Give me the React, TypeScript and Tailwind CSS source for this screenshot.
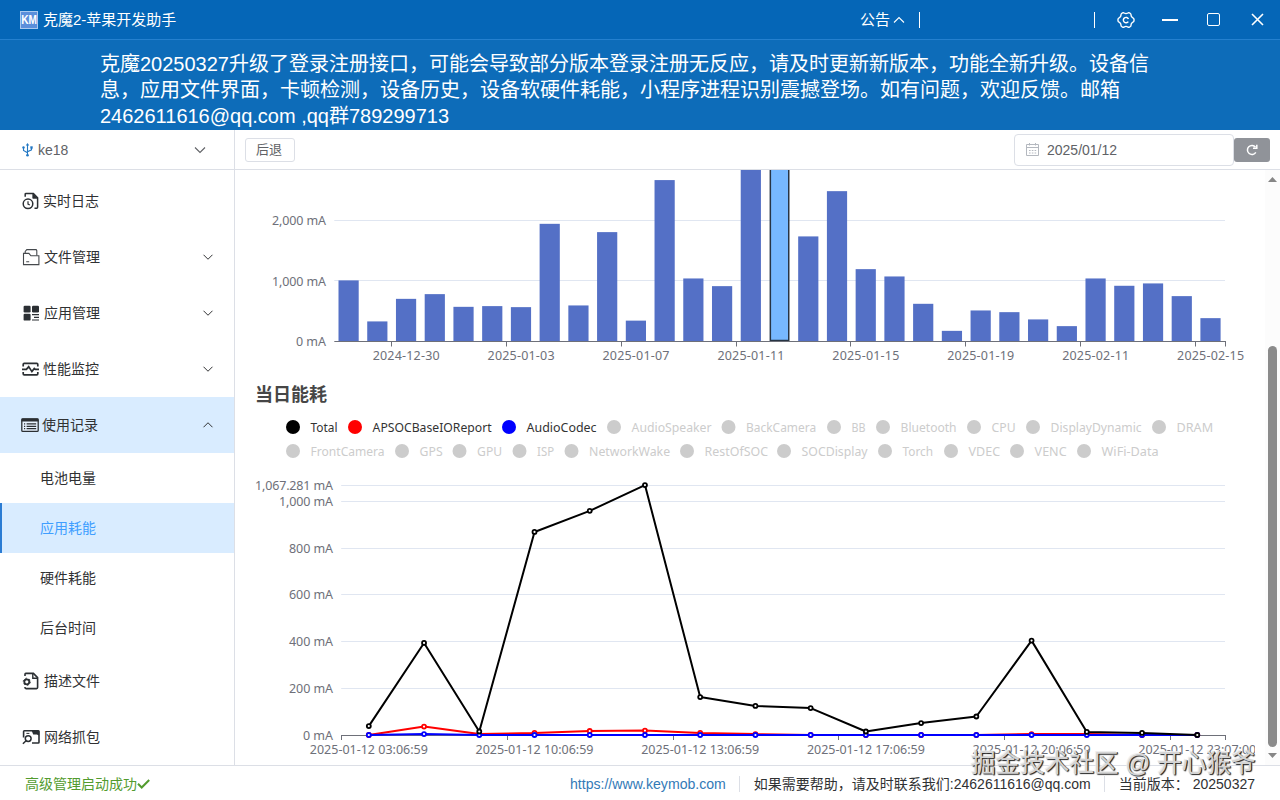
import { useState } from "react";
import type { ReactNode } from "react";

const DAILY = [
  1010, 332, 705, 783, 573, 585, 568, 1945, 596, 1808, 345, 2668, 1042, 915,
  3120, 3300, 1737, 2485, 1196, 1075, 623, 176, 513, 485, 365, 254, 1042, 921,
  960, 750, 386,
];
const SELECTED_DAY = 15;

const DAY_LABELS = [
  "2024-12-30",
  "2025-01-03",
  "2025-01-07",
  "2025-01-11",
  "2025-01-15",
  "2025-01-19",
  "2025-02-11",
  "2025-02-15",
];

const SERIES = [
  {
    color: "#ff0000",
    data: [0, 36, 4, 9, 17, 19, 9, 4, 0, 0, 0, 0, 4, 4, 0, 0],
  },
  {
    color: "#0000ff",
    data: [0, 4, 0, 0, 0, 0, 0, 0, 0, 0, 0, 0, 0, 0, 0, 0],
  },
  {
    color: "#000000",
    data: [
      38, 393, 15, 867, 957, 1067.281, 162, 124, 115, 15, 51, 79, 403, 13, 9, 0,
    ],
  },
];

const HOUR_LABELS = [
  "2025-01-12 03:06:59",
  "2025-01-12 10:06:59",
  "2025-01-12 13:06:59",
  "2025-01-12 17:06:59",
  "2025-01-12 20:06:59",
  "2025-01-12 23:07:00",
];

type LegendItem = { name: string; x: number; w: number; color?: string };

const LEGEND: LegendItem[][] = [
  [
    { name: "Total", x: 38, w: 27, color: "#000000" },
    { name: "APSOCBaseIOReport", x: 100, w: 119, color: "#ff0000" },
    { name: "AudioCodec", x: 254, w: 70, color: "#0000ff" },
    { name: "AudioSpeaker", x: 359, w: 80 },
    { name: "BackCamera", x: 473.5, w: 70 },
    { name: "BB", x: 579, w: 14 },
    { name: "Bluetooth", x: 628, w: 56 },
    { name: "CPU", x: 719, w: 24 },
    { name: "DisplayDynamic", x: 778, w: 91 },
    { name: "DRAM", x: 904, w: 36.5 },
  ],
  [
    { name: "FrontCamera", x: 38, w: 74 },
    { name: "GPS", x: 147, w: 23 },
    { name: "GPU", x: 204.5, w: 25 },
    { name: "ISP", x: 264.5, w: 17 },
    { name: "NetworkWake", x: 316.5, w: 81 },
    { name: "RestOfSOC", x: 432, w: 63.5 },
    { name: "SOCDisplay", x: 529, w: 66 },
    { name: "Torch", x: 630, w: 30.5 },
    { name: "VDEC", x: 696, w: 31.5 },
    { name: "VENC", x: 762, w: 32 },
    { name: "WiFi-Data", x: 829, w: 57 },
  ],
];

function DailyChart() {
  const left = 79.3;
  const step = 28.73;
  const base = 171.5;
  const scale = 0.0605;

  return (
    <svg
      width="1000"
      height="210"
      className="block shrink-0 font-['Noto_Sans',sans-serif] text-[12.5px]"
    >
      {[0, 1000, 2000].map((v) => (
        <g key={v}>
          {v > 0 && (
            <line
              x1={left}
              x2="970"
              y1={Math.floor(base - v * scale - 0.4) + 0.5}
              y2={Math.floor(base - v * scale - 0.4) + 0.5}
              stroke="#E0E6F1"
            />
          )}
          <text
            x="71"
            y={base - v * scale + 4.5}
            textAnchor="end"
            textLength={v > 0 ? 54 : 30}
            fill="#6E7079"
          >
            {v.toLocaleString("en-US")} mA
          </text>
        </g>
      ))}
      {DAILY.map((v, i) => {
        const h = v * scale;
        const x = left + step * i + 4.2;
        if (i === SELECTED_DAY) {
          return (
            <rect
              key={i}
              x={x + 0.9}
              y={base - h}
              width="18.4"
              height={h - 1}
              fill="#77b8ff"
              stroke="#273444"
              strokeWidth="1.5"
            />
          );
        }
        return (
          <rect
            key={i}
            x={x}
            y={base - h}
            width="20.2"
            height={h}
            fill="#5470c6"
          />
        );
      })}
      <line x1={left} x2="971" y1={base} y2={base} stroke="#6E7079" />
      {DAY_LABELS.map((label, i) => {
        const tick = Math.round(left + step * (2 + i * 4)) - 0.5;
        return (
          <g key={label}>
            <line
              x1={tick}
              x2={tick}
              y1={base}
              y2={base + 5}
              stroke="#6E7079"
            />
            <text
              x={left + step * (2.5 + i * 4)}
              y="190"
              textAnchor="middle"
              textLength="67"
              fill="#6E7079"
            >
              {label}
            </text>
          </g>
        );
      })}
      <line x1="970.5" x2="970.5" y1={base} y2={base + 5} stroke="#6E7079" />
    </svg>
  );
}

function HourlyChart() {
  const left = 86.2;
  const step = 55.23;
  const base = 325;
  const scale = 0.2342;
  const px = (i: number) => left + step * (i + 0.5);
  const py = (v: number) => base - v * scale;

  return (
    <svg
      width="1000"
      height="355"
      className="block shrink-0 font-['Noto_Sans',sans-serif] text-[12.5px]"
    >
      {LEGEND.map((row, r) =>
        row.map((item) => (
          <g key={item.name}>
            <circle
              cx={item.x}
              cy={17 + r * 24}
              r="7"
              fill={item.color ?? "#cccccc"}
            />
            <text
              x={item.x + 17.6}
              y={22 + r * 24}
              textLength={item.w}
              lengthAdjust="spacingAndGlyphs"
              fill={item.color ? "#333333" : "#cccccc"}
            >
              {item.name}
            </text>
          </g>
        ))
      )}
      {[0, 200, 400, 600, 800, 1000, 1067.281].map((v) => (
        <g key={v}>
          {v > 0 && (
            <line
              x1={left}
              x2="970"
              y1={Math.round(py(v)) + 0.5}
              y2={Math.round(py(v)) + 0.5}
              stroke="#E0E6F1"
            />
          )}
          <text
            x="78"
            y={py(v) + 5}
            textAnchor="end"
            textLength={v > 1000 ? 78 : v === 1000 ? 54 : v > 0 ? 44 : 30}
            fill="#6E7079"
          >
            {v.toLocaleString("en-US")} mA
          </text>
        </g>
      ))}
      <line
        x1={left}
        x2="971"
        y1={base + 0.5}
        y2={base + 0.5}
        stroke="#6E7079"
      />
      {HOUR_LABELS.map((label, i) => {
        const tick = Math.round(left + step * 3 * i) + 0.5;
        return (
          <g key={label}>
            <line
              x1={tick}
              x2={tick}
              y1={base}
              y2={base + 5}
              stroke="#6E7079"
            />
            <text
              x={px(i * 3)}
              y="344"
              textAnchor="middle"
              textLength="118"
              fill="#6E7079"
            >
              {label}
            </text>
          </g>
        );
      })}
      <line x1="970.5" x2="970.5" y1={base} y2={base + 5} stroke="#6E7079" />
      {SERIES.map((s) => (
        <g key={s.color} stroke={s.color} strokeWidth="2">
          <polyline
            points={s.data.map((v, i) => `${px(i)},${py(v)}`).join(" ")}
            fill="none"
            strokeLinejoin="bevel"
          />
          {s.data.map((v, i) => (
            <circle
              key={i}
              cx={px(i)}
              cy={py(v)}
              r="2"
              fill="#ffffff"
              strokeWidth="1.8"
            />
          ))}
        </g>
      ))}
    </svg>
  );
}

function Chevron({ up, className }: { up?: boolean; className?: string }) {
  return (
    <svg
      width="12"
      height="8"
      viewBox="0 0 12 8"
      fill="none"
      stroke="currentColor"
      strokeWidth="1.1"
      className={className}
    >
      <path d={up ? "M1 6.5l5-5 5 5" : "M1 1.5l5 5 5-5"} />
    </svg>
  );
}

function MenuIcon({ children }: { children: ReactNode }) {
  return (
    <svg
      width="18"
      height="18"
      viewBox="0 0 18 18"
      fill="none"
      stroke="#2b2f33"
      strokeWidth="1.5"
      className="shrink-0"
    >
      {children}
    </svg>
  );
}

const logIcon = (
  <MenuIcon>
    <path d="M3.2 4.8V2.2q0-.7.8-.7h7.4l4.2 4.2v9.6q0 .9-.9.9h-2.2" />
    <path d="M10.8 1.8v4.5h4.5z" fill="#2b2f33" strokeWidth=".8" />
    <circle cx="6" cy="11.8" r="4.8" />
    <path d="M6 9.2v2.9l1.8.9" strokeWidth="1.2" />
  </MenuIcon>
);

const folderIcon = (
  <MenuIcon>
    <g strokeWidth="1.1" stroke="#45494d">
      <path d="M1.5 16.6V5.4h5.4l2 2.4h8v8.8z" />
      <path d="M3.2 5.2V3.4L4.8 1.6h9.4l.6 1v5M4.2 13.8h3" />
    </g>
  </MenuIcon>
);

const appsIcon = (
  <MenuIcon>
    <g fill="#2b2f33" stroke="none">
      <rect x="1.6" y="1.8" width="7" height="6.6" rx="1.2" />
      <rect x="10" y="1.8" width="7" height="6.6" rx="1.2" />
      <rect x="1.6" y="9.8" width="7" height="6.8" rx="1.2" />
    </g>
    <path d="M10 10.6h7M12 13.3h5M10 16h7" strokeWidth="1.2" />
  </MenuIcon>
);

const perfIcon = (
  <MenuIcon>
    <path
      d="M1.2 6.6V4.4q0-1 1-1h12.6q1 0 1 1v2.2M1.2 12v1.8q0 1 1 1h12.6q1 0 1-1V12"
      strokeWidth="1.7"
    />
    <path d="M0 9.4h4.4l2.3-2.8 3.2 5 2.4-3.2 1 .9H17" strokeWidth="1.7" />
  </MenuIcon>
);

const recordIcon = (
  <MenuIcon>
    <rect
      x=".8"
      y="3"
      width="16.4"
      height="12.4"
      rx="1"
      fill="#ffffff"
      fillOpacity=".4"
      strokeWidth="1.3"
    />
    <path d="M.6 4h16.8" strokeWidth="3" />
    <path
      d="M3 7.9h1.2M5.6 7.9h9.6M3 10.3h1.2M5.6 10.3h9.6M3 12.7h1.2M5.6 12.7h9.6"
      strokeWidth="1.2"
    />
  </MenuIcon>
);

const profileIcon = (
  <MenuIcon>
    <path
      d="M3 4V2.2q0-.8.8-.8h7.6L15.6 5.6v10q0 1-1 1H4q-1 0-1-1v-.6"
      strokeWidth="1.6"
    />
    <path d="M10.8 1.6v4.6h4.6" strokeWidth="1.4" />
    <circle cx="4.8" cy="9.8" r="2.5" strokeWidth="1.8" />
    <circle
      cx="4.8"
      cy="9.8"
      r="3.6"
      strokeWidth=".9"
      strokeDasharray="1.6 2.17"
    />
  </MenuIcon>
);

const captureIcon = (
  <MenuIcon>
    <path
      d="M1.6 9.6V3.6q0-.8.8-.8h13.8q.8 0 .8.8v10.6q0 .8-.8.8H10"
      strokeWidth="1.6"
    />
    <path d="M9.6 2.4h7.6v5.2l-2.4-1.2h-3.6z" fill="#2b2f33" stroke="none" />
    <circle cx="6.2" cy="10.6" r="2.9" />
    <path d="M4.1 12.7L.9 15.8" />
    <path d="M4.4 5.4h3" strokeWidth="1" />
  </MenuIcon>
);

type MenuEntry = {
  label: string;
  icon: ReactNode;
  children?: string[];
  expandable?: boolean;
  iconClass: string;
};

const MENU: MenuEntry[] = [
  { label: "实时日志", icon: logIcon, iconClass: "pl-[22px] gap-[3px]" },
  {
    label: "文件管理",
    icon: folderIcon,
    expandable: true,
    iconClass: "pl-[22px] gap-[4px]",
  },
  {
    label: "应用管理",
    icon: appsIcon,
    expandable: true,
    iconClass: "pl-[22px] gap-[4px]",
  },
  {
    label: "性能监控",
    icon: perfIcon,
    expandable: true,
    iconClass: "pl-[22px] gap-[3px]",
  },
  {
    label: "使用记录",
    icon: recordIcon,
    expandable: true,
    children: ["电池电量", "应用耗能", "硬件耗能", "后台时间"],
    iconClass: "pl-[21px] gap-[3px]",
  },
  { label: "描述文件", icon: profileIcon, iconClass: "pl-[22px] gap-[4px]" },
  { label: "网络抓包", icon: captureIcon, iconClass: "pl-[22px] gap-[4px]" },
];

function Sidebar() {
  const [open, setOpen] = useState("使用记录");
  const [active, setActive] = useState("应用耗能");

  return (
    <aside className="flex w-[235px] shrink-0 flex-col border-r border-[#dcdfe6]">
      <div className="flex h-10 shrink-0 items-center border-b border-[#dcdfe6] pr-7 pl-[22px]">
        <svg
          width="11"
          height="14"
          viewBox="0 0 11 14"
          fill="none"
          stroke="#2378c4"
          strokeWidth="1.1"
        >
          <path d="M5.5 2v10M1.5 5v2.4l4 2.3M9.5 5v1.8l-4 2" />
          <path d="M5.5 0L3.8 2.6h3.4z" fill="#2378c4" stroke="none" />
          <circle cx="5.5" cy="12.3" r="1.3" fill="#2378c4" stroke="none" />
          <circle cx="1.5" cy="4.5" r="1.2" fill="#2378c4" stroke="none" />
          <path d="M8.3 3.3h2.4v2.4H8.3z" fill="#2378c4" stroke="none" />
        </svg>
        <span className="ml-[5px] text-sm text-[#606266]">ke18</span>
        <Chevron className="ml-auto text-[#606266]" />
      </div>

      <nav className="flex flex-col pt-[3px] text-sm text-[#303133]">
        {MENU.map((entry) => {
          const expanded = open === entry.label;
          return (
            <div key={entry.label}>
              <button
                onClick={() => setOpen(expanded ? "" : entry.label)}
                className={`flex h-14 w-full items-center pr-5 ${entry.iconClass} ${
                  expanded ? "bg-[#d9ecff]" : ""
                }`}
              >
                {entry.icon}
                <span>{entry.label}</span>
                {entry.expandable && (
                  <Chevron up={expanded} className="ml-auto scale-90" />
                )}
              </button>
              {expanded &&
                entry.children?.map((child) => (
                  <button
                    key={child}
                    onClick={() => setActive(child)}
                    className={`flex h-[50px] w-full items-center border-l-2 pl-[38px] ${
                      active === child
                        ? "border-[#2b7cd3] bg-[#d9ecff] text-[#409eff]"
                        : "border-transparent"
                    }`}
                  >
                    {child}
                  </button>
                ))}
            </div>
          );
        })}
      </nav>
    </aside>
  );
}

function TitleBar() {
  return (
    <header className="flex h-10 shrink-0 items-center border-b border-[#2480cf] bg-[#0566b7] pl-5 text-white">
      <div className="flex h-[18px] w-[18px] items-center justify-center border border-[#a9c9ef] bg-[#5b8fdb]">
        <span className="scale-x-[.78] text-[13px] leading-none font-bold">
          KM
        </span>
      </div>
      <span className="ml-[5px] pt-[2px] text-[15px] whitespace-nowrap">
        克魔2-苹果开发助手
      </span>

      <div className="ml-auto flex items-center">
        <span className="pt-[2px] text-[15px]">公告</span>
        <Chevron up className="ml-[3px]" />
        <span className="ml-[14px] h-4 w-px bg-white" />
        <span className="ml-[174px] h-4 w-px bg-white" />
        <svg
          width="18"
          height="18"
          viewBox="0 0 18 18"
          fill="none"
          stroke="currentColor"
          strokeWidth="1.4"
          className="ml-[22px]"
        >
          <path
            d="M5.6 1.9q.9-.5 1.6.1 1.8 1.2 3.6 0 .7-.6 1.6-.1l1 .6q.7.5.6 1.4 0 2 1.9 2.9 1.1.5 1.1 1.5v1.4q0 1-1.1 1.5-1.9.9-1.9 2.9.1.9-.6 1.4l-1 .6q-.9.5-1.6-.1-1.8-1.2-3.6 0-.7.6-1.6.1l-1-.6Q3.900 15 4 14.100q0-2-1.900-2.900Q1 10.700 1 9.700V8.300q0-1 1.100-1.500Q4 5.900 4 3.900 3.900 3 4.600 2.500z"
            strokeLinejoin="round"
          />
          <path d="M11.300 10.600A2.700 2.700 0 1 1 11.500 8" />
        </svg>
        <span className="ml-[27px] h-[2px] w-4 bg-white" />
        <span className="ml-[29px] h-[13px] w-[13px] rounded-[2px] border-[1.5px] border-white" />
        <svg
          width="13"
          height="13"
          viewBox="0 0 13 13"
          stroke="currentColor"
          strokeWidth="1.6"
          className="mr-4 ml-[31px]"
        >
          <path d="M1 1l11 11M12 1L1 12" />
        </svg>
      </div>
    </header>
  );
}

function Toolbar() {
  return (
    <div className="flex h-10 shrink-0 items-center border-b border-[#dcdfe6] pr-[10px] pl-[10px]">
      <button className="h-6 w-[50px] rounded-[3px] border border-[#dcdfe6] pr-[2px] text-[13px] leading-none text-[#606266]">
        后退
      </button>
      <div className="ml-auto flex h-8 w-[220px] items-center rounded border border-[#dcdfe6] pl-[11px]">
        <svg
          width="13"
          height="13"
          viewBox="0 0 13 13"
          fill="none"
          stroke="#b4b8bf"
        >
          <path d="M.5 1.5h12v11H.5zM.5 4.5h12M3.5 0v2.5M9.5 0v2.5" />
          <path d="M3 7.5h7.500M3 10h7.500" strokeDasharray="1.600 1.200" />
        </svg>
        <span className="ml-2 text-sm text-[#606266]">2025/01/12</span>
      </div>
      <button className="flex h-6 w-9 items-center justify-center rounded-[3px] bg-[#909399]">
        <svg
          width="12"
          height="12"
          viewBox="0 0 12 12"
          fill="none"
          stroke="#ffffff"
          strokeWidth="1.5"
        >
          <path d="M9.8 8.3A4.5 4.5 0 1 1 9.5 3.2" />
          <path d="M7 4.3h3.8V.8" />
        </svg>
      </button>
    </div>
  );
}

function Scrollbar() {
  return (
    <div className="ml-auto flex w-[15px] shrink-0 flex-col items-center bg-[#fcfcfc] pt-[7px]">
      <svg width="9" height="5" viewBox="0 0 9 5" fill="#868686">
        <path d="M4.5 0L9 5H0z" />
      </svg>
      <div className="mt-[164px] h-[401px] w-[9px] rounded-full bg-[#8b8b8b]" />
      <svg
        width="9"
        height="5"
        viewBox="0 0 9 5"
        fill="#868686"
        className="mt-[6px]"
      >
        <path d="M0 0h9L4.5 5z" />
      </svg>
    </div>
  );
}

function Footer() {
  return (
    <footer className="flex h-[35px] shrink-0 items-center border-t border-[#dcdfe6] pt-[2px] pr-[25px] pl-[25px] text-sm whitespace-nowrap text-[#303133]">
      <span className="text-[#529b2e]">高级管理启动成功</span>
      <svg
        width="13"
        height="10"
        viewBox="0 0 13 10"
        fill="none"
        stroke="#529b2e"
        strokeWidth="2"
      >
        <path d="M1 4.8l3.700 3.700L12.200 1" />
      </svg>
      <a className="ml-auto text-[14.1px] text-[#337ab7]" href="#">
        https://www.keymob.com
      </a>
      <span className="ml-[13px] h-4 w-px bg-[#dcdfe6]" />
      <span className="ml-[14px]">如果需要帮助，请及时联系我们:2462611616@qq.com</span>
      <span className="ml-[13px] h-4 w-px bg-[#dcdfe6]" />
      <span className="ml-[14px]">当前版本：</span>
      <span className="ml-1">20250327</span>
    </footer>
  );
}

export default function App() {
  return (
    <div className="relative flex h-[800px] w-[1280px] flex-col overflow-hidden bg-white font-['Liberation_Sans','Noto_Sans_CJK_SC',sans-serif]">
      <TitleBar />

      {/* Announcement */}
      <div className="h-[90px] shrink-0 bg-[#0d6cb9] pt-[11px] pl-[100px] text-xl leading-[26px] text-white">
        <p className="w-[1060px]">
          克魔20250327升级了登录注册接口，可能会导致部分版本登录注册无反应，请及时更新新版本，功能全新升级。设备信息，应用文件界面，卡顿检测，设备历史，设备软硬件耗能，小程序进程识别震撼登场。如有问题，欢迎反馈。邮箱2462611616@qq.com
          ,qq群789299713
        </p>
      </div>

      <div className="flex min-h-0 flex-1">
        <Sidebar />
        <main className="flex min-w-0 flex-1 flex-col">
          <Toolbar />
          <div className="flex min-h-0 flex-1 overflow-hidden">
            <div className="flex flex-col pl-5">
              <DailyChart />
              <h3 className="h-[30px] shrink-0 text-lg leading-[30px] font-bold text-[#464646]">
                当日能耗
              </h3>
              <HourlyChart />
            </div>
            <Scrollbar />
          </div>
        </main>
      </div>

      <Footer />

      {/* Watermark */}
      <div className="absolute top-[747px] left-[971px] text-[24.6px] leading-[34px] whitespace-nowrap text-[#d4d4d4] [text-shadow:1px_1px_1px_#222,-1px_-1px_0_#eee,1px_0_0_#555]">
        掘金技术社区 @ 开心猴爷
      </div>
    </div>
  );
}
